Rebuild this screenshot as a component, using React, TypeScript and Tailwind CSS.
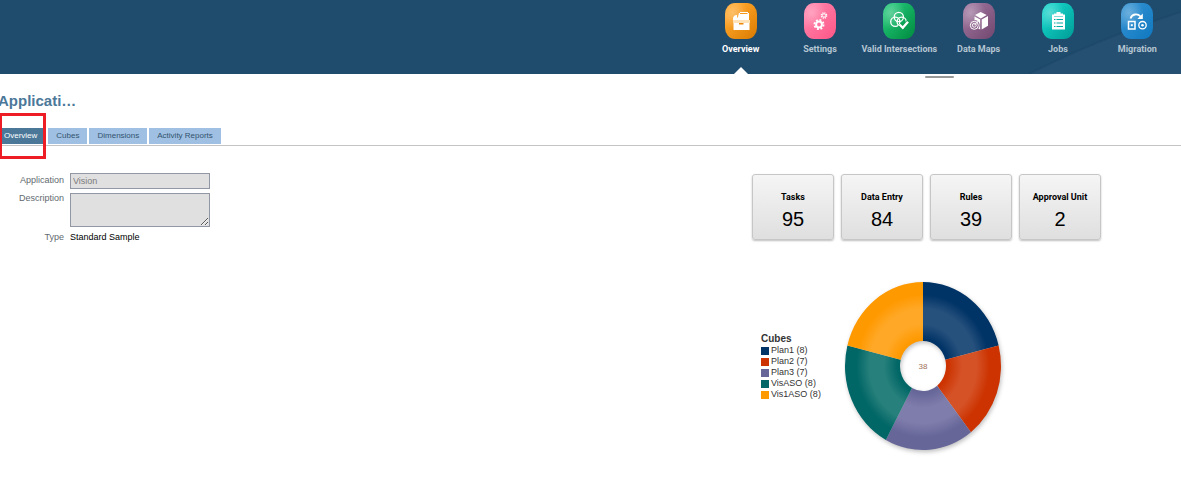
import type { ReactNode } from "react"

const navItems = [
  { id: "overview", label: "Overview", from: "#ffa62b", to: "#d97a00", active: true },
  { id: "settings", label: "Settings", from: "#ff7fa8", to: "#ff5686", active: false },
  { id: "intersections", label: "Valid Intersections", from: "#1fc274", to: "#008a3e", active: false },
  { id: "maps", label: "Data Maps", from: "#9a7099", to: "#71466f", active: false },
  { id: "jobs", label: "Jobs", from: "#12d0c6", to: "#009c96", active: false },
  { id: "migration", label: "Migration", from: "#2f8fd0", to: "#0f78c0", active: false },
]

const glyphs: Record<string, ReactNode> = {
  overview: (
    <>
      <path d="M14 10h1V9h8v1h1v7H13v-3z" fill="#fff" />
      <path d="M15 10.5h7.5" stroke="#f59a1b" strokeWidth="1" />
      <path d="M8 16a4 4 0 0 1 4-4v2l3 3H8z" fill="#fff" />
      <path d="M8 17h17v3H8z" fill="#ffe2b8" />
      <path d="M8.5 20h16v7h-16z" fill="#fff" />
      <path d="M14 20h4.500v1.500H14z" fill="#e8890a" />
    </>
  ),
  settings: (
    <>
      <circle cx="15" cy="21.500" r="4.600" fill="none" stroke="#fff" strokeWidth="1.800" strokeDasharray="1.900 1.700" />
      <circle cx="15" cy="21.500" r="2.900" fill="none" stroke="#fff" strokeWidth="2" />
      <circle cx="20" cy="12.500" r="2.700" fill="none" stroke="#fff" strokeWidth="1.200" strokeDasharray="1.200 0.920" />
      <circle cx="20" cy="12.500" r="1.700" fill="none" stroke="#fff" strokeWidth="1" />
    </>
  ),
  intersections: (
    <>
      <g fill="none" stroke="#fff" strokeWidth="1.300">
        <circle cx="15.800" cy="14" r="4.600" />
        <circle cx="12.300" cy="18.800" r="4.600" />
        <circle cx="18.700" cy="18.800" r="4.600" />
      </g>
      <path d="M16.500 21.500l3.300 3.300 5.200-6" fill="none" stroke="#0a9a4b" strokeWidth="4" />
      <path d="M16.500 21.500l3.300 3.300 5.200-6" fill="none" stroke="#fff" strokeWidth="2.400" />
    </>
  ),
  maps: (
    <>
      <path d="M12 12l5.700-3 6 3-6 3.500z" fill="#fff" />
      <path d="M18.700 16.500l6.300-3.500v9.700l-6.300 3.800z" fill="#fff" />
      <path d="M11.500 13.500l5.700 3v10l-2-1a5 5 0 0 0-3.700-8.500z" fill="#fff" />
      <g fill="none" stroke="#fff" strokeWidth="1">
        <circle cx="11.300" cy="22.300" r="4" />
        <circle cx="11.300" cy="22.300" r="1.900" />
        <path d="M11.300 22.300l4-4.300" />
      </g>
    </>
  ),
  jobs: (
    <>
      <path d="M10 11.500h13v15H10z" fill="#fff" />
      <path d="M12 10.500h9v3h-9z" fill="#0abab1" />
      <path d="M14.500 9h4v1.500h2.500V13h-9v-2.500h2.500z" fill="#fff" />
      <path d="M12 16.500h1.500M14.500 16.500H21M12 20h1.500M14.500 20H21M12 23.500h1.500M14.500 23.500H21" stroke="#08aaa3" strokeWidth="1.200" />
    </>
  ),
  migration: (
    <>
      <path d="M7.500 18.500h6.500v7.500H7.500z" fill="none" stroke="#fff" strokeWidth="1.500" />
      <path d="M9.800 21.200h2v2h-2z" fill="#fff" />
      <circle cx="21.500" cy="22.200" r="3.700" fill="none" stroke="#fff" strokeWidth="1.300" />
      <circle cx="21.500" cy="22.200" r="1.300" fill="#fff" />
      <path d="M9.500 15.500c1.500-4.500 7-5.500 10-2" fill="none" stroke="#fff" strokeWidth="1.800" />
      <path d="M21.800 10.500v5.500h-5.500z" fill="#fff" />
    </>
  ),
}

const tabs = ["Overview", "Cubes", "Dimensions", "Activity Reports"]

const stats = [
  { label: "Tasks", value: 95 },
  { label: "Data Entry", value: 84 },
  { label: "Rules", value: 39 },
  { label: "Approval Unit", value: 2 },
]

const cubes = [
  { name: "Plan1", count: 8, color: "#003366", light: "#27517d" },
  { name: "Plan2", count: 7, color: "#cc3300", light: "#d55227" },
  { name: "Plan3", count: 7, color: "#666699", light: "#7f7dab" },
  { name: "VisASO", count: 8, color: "#006666", light: "#27807b" },
  { name: "Vis1ASO", count: 8, color: "#ff9900", light: "#ffa827" },
]

const total = cubes.reduce((sum, cube) => sum + cube.count, 0)

function NavIcon({ id, from, to }: { id: string; from: string; to: string }) {
  return (
    <svg viewBox="0 0 32 36" className="h-9 w-8" aria-hidden="true">
      <defs>
        <linearGradient id={`${id}-bg`} x1="0" y1="0" x2="1" y2="1">
          <stop offset="0.2" stopColor={from} />
          <stop offset="1" stopColor={to} />
        </linearGradient>
        <radialGradient id={`${id}-shine`} cx="0.25" cy="0.28" r="0.45">
          <stop offset="0" stopColor="#fff" stopOpacity="0.3" />
          <stop offset="1" stopColor="#fff" stopOpacity="0" />
        </radialGradient>
      </defs>
      <rect width="32" height="36" rx="10" ry="11" fill={`url(#${id}-bg)`} />
      <rect width="32" height="36" rx="10" ry="11" fill={`url(#${id}-shine)`} />
      {glyphs[id]}
    </svg>
  )
}

function Donut() {
  const cx = 79
  const cy = 85
  const point = (share: number, rx: number, ry: number) => {
    const angle = share * 2 * Math.PI
    return `${(cx + rx * Math.sin(angle)).toFixed(2)} ${(cy - ry * Math.cos(angle)).toFixed(2)}`
  }
  let used = 0

  return (
    <svg viewBox="0 0 164 176" className="h-[176px] w-[164px]" role="img" aria-label="Cubes">
      <defs>
        {cubes.map((cube) => (
          <radialGradient
            key={cube.name}
            id={`slice-${cube.name}`}
            gradientUnits="userSpaceOnUse"
            cx="0"
            cy="0"
            r="84"
            gradientTransform={`translate(${cx} ${cy}) scale(0.935 1)`}
          >
            <stop offset="0.32" stopColor={cube.color} />
            <stop offset="0.5" stopColor={cube.light} />
            <stop offset="0.68" stopColor={cube.light} />
            <stop offset="0.85" stopColor={cube.color} />
          </radialGradient>
        ))}
      </defs>
      <g className="drop-shadow-[1px_2px_2px_rgba(0,0,0,0.25)]">
        {cubes.map((cube) => {
          const start = used / total
          used += cube.count
          const end = used / total
          return (
            <path
              key={cube.name}
              d={`M${point(start, 78, 84)}A78 84 0 0 1 ${point(end, 78, 84)}L${point(end, 23, 25)}A23 25 0 0 0 ${point(start, 23, 25)}Z`}
              fill={`url(#slice-${cube.name})`}
            />
          )
        })}
      </g>
      <text x={cx} y={cy + 3} textAnchor="middle" fontSize="8" fill="#a0705a">
        {total}
      </text>
    </svg>
  )
}

export default function App() {
  return (
    <div className="min-h-screen overflow-hidden bg-white font-['Liberation_Sans',Arial,sans-serif] text-[9px] leading-[11px] text-black">
      <header className="relative flex justify-end bg-[#1f4b6d] pr-1">
        <svg viewBox="0 0 180 74" className="absolute right-0 top-0 h-full w-[180px]" aria-hidden="true">
          <path d="M28 74Q95 40 180 12V74Z" fill="#fff" fillOpacity="0.03" />
          <path d="M28 74Q95 40 180 12" fill="none" stroke="#173f60" strokeOpacity="0.25" strokeWidth="2" />
        </svg>
        <nav className="relative grid h-[74px] w-[476px] grid-cols-6">
          {navItems.map((item) => (
            <a
              key={item.id}
              href="#"
              className={`relative flex flex-col items-center gap-[5px] whitespace-nowrap pt-[3px] font-['Roboto',sans-serif] font-bold ${
                item.active ? "text-white" : "text-[#b5c6d3]"
              }`}
            >
              <NavIcon id={item.id} from={item.from} to={item.to} />
              {item.label}
              {item.active && (
                <span className="absolute bottom-0 left-1/2 -translate-x-1/2 border-x-[7px] border-b-[7px] border-x-transparent border-b-white" />
              )}
            </a>
          ))}
        </nav>
        <span className="absolute -bottom-1 right-[227px] h-[2px] w-[29px] rounded bg-[#999]" />
      </header>

      <main>
        <h1 className="-ml-[2px] pt-[17px] text-[15px] font-bold leading-5 text-[#4b7899]">Applicati…</h1>

        <div className="relative mt-[17px] flex gap-[2px] border-b border-[#c4c4c4] pb-px text-[8px]">
          {tabs.map((tab, index) => (
            <button
              key={tab}
              type="button"
              className={`h-4 pb-px ${index === 0 ? "bg-[#4b7899] pl-1 pr-[9px] text-white" : "bg-[#9fc0e2] px-2 text-[#33536f]"}`}
            >
              {tab}
            </button>
          ))}
          <span className="pointer-events-none absolute -left-px -top-[15px] h-[46px] w-[47px] border-[3px] border-[#ee1c25]" />
        </div>

        <div className="flex items-start justify-between">
          <form className="grid grid-cols-[64px_140px] gap-x-[6px] gap-y-1 pt-[27px] text-[#5f6a70]">
            <label htmlFor="application" className="pt-[2px] text-right">
              Application
            </label>
            <input
              id="application"
              defaultValue="Vision"
              disabled
              className="h-4 w-full border border-[#9297a6] bg-[#e0e0e0] px-[2px] text-[#7b7b7b]"
            />
            <label htmlFor="description" className="text-right">
              Description
            </label>
            <textarea id="description" disabled className="block h-[34px] w-full border border-[#9297a6] bg-[#e0e0e0]" />
            <span className="pt-px text-right">Type</span>
            <span className="pt-px text-black">Standard Sample</span>
          </form>

          <section className="mr-20 w-[349px] pt-7">
            <div className="grid grid-cols-4 gap-[7px]">
              {stats.map((stat) => (
                <div
                  key={stat.label}
                  className="flex h-[66px] flex-col items-center rounded-[3px] border border-[#c6c6c6] bg-linear-to-b from-[#f5f5f5] to-[#dfdfdf] pt-[17px] shadow-[0_1px_2px_rgba(0,0,0,0.25)]"
                >
                  <div className="whitespace-nowrap font-['Roboto',sans-serif] font-bold">{stat.label}</div>
                  <div className="pt-[6px] text-[20px] leading-5">{stat.value}</div>
                </div>
              ))}
            </div>

            <div className="flex items-center pl-[9px] pt-[41px]">
              <div className="w-[83px] pb-[5px] text-[#333]">
                <h2 className="text-[10px] font-bold leading-3">Cubes</h2>
                <ul>
                  {cubes.map((cube) => (
                    <li key={cube.name} className="flex items-center gap-[2px]">
                      <span className="h-2 w-2" style={{ backgroundColor: cube.color }} />
                      {cube.name} ({cube.count})
                    </li>
                  ))}
                </ul>
              </div>
              <Donut />
            </div>
          </section>
        </div>
      </main>
    </div>
  )
}
